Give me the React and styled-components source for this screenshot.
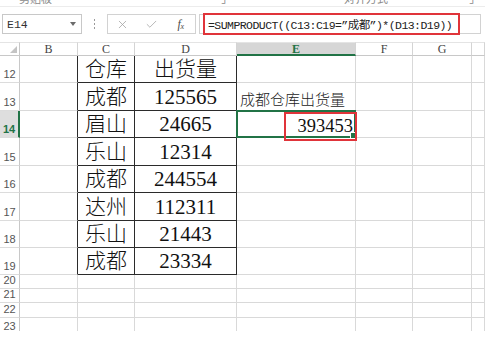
import React from 'react';
import styled, { createGlobalStyle } from 'styled-components';
import { X, Check } from 'lucide-react';

const GlobalStyle = createGlobalStyle`
  html, body {
    margin: 0;
    padding: 0;
    background: #fff;
  }
  body {
    width: 485px;
    height: 349px;
    overflow: hidden;
    font-family: "Liberation Sans", "Noto Sans CJK SC", sans-serif;
  }
`;

const GREEN = '#217346';
const GRID = '#d9d9d9';
const INK = '#2b2b2b';

const columns = [
  { key: 'B', w: 58 },
  { key: 'C', w: 57 },
  { key: 'D', w: 102 },
  { key: 'E', w: 119 },
  { key: 'F', w: 57 },
  { key: 'G', w: 59 },
  { key: 'H', w: 13 },
];

const rows = [
  { n: 12, h: 27, C: '仓库', D: '出货量' },
  { n: 13, h: 28, C: '成都', D: '125565', E: '成都仓库出货量' },
  { n: 14, h: 27, C: '眉山', D: '24665', E: '393453' },
  { n: 15, h: 28, C: '乐山', D: '12314' },
  { n: 16, h: 27, C: '成都', D: '244554' },
  { n: 17, h: 28, C: '达州', D: '112311' },
  { n: 18, h: 27, C: '乐山', D: '21443' },
  { n: 19, h: 27, C: '成都', D: '23334' },
  { n: 20, h: 14 },
  { n: 21, h: 14 },
  { n: 22, h: 15 },
  { n: 23, h: 17 },
];

const Page = styled.div`
  width: 485px;
  height: 349px;
  background: #fff;
  overflow: hidden;
`;

/* ribbon labels, mostly scrolled out of view */
const Ribbon = styled.div`
  height: 7px;
  display: flex;
  align-items: flex-end;
  overflow: hidden;
  border-bottom: 1px solid #ececec;
  box-sizing: border-box;
`;

const RibbonGroup = styled.div`
  width: ${(p) => p.$w}px;
  flex: none;
  height: 14px;
  display: flex;
  align-items: flex-end;
  justify-content: flex-end;
  padding-right: ${(p) => p.$pad || 0}px;
  box-sizing: border-box;
  font-size: 11px;
  line-height: 14px;
  color: #8a8a8a;
`;

const FormulaRow = styled.div`
  margin-top: 6px;
  height: 22px;
  display: flex;
  align-items: center;
`;

const NameBox = styled.div`
  margin-left: 2px;
  width: 80px;
  height: 20px;
  box-sizing: border-box;
  border: 1px solid #c8c8c8;
  display: flex;
  align-items: center;
  justify-content: space-between;
  padding: 0 4px;
  font-family: "Liberation Mono", monospace;
  font-size: 11.5px;
  color: #333;
`;

const Caret = styled.span`
  width: 0;
  height: 0;
  border-left: 3px solid transparent;
  border-right: 3px solid transparent;
  border-top: 4px solid #6b6b6b;
  margin-right: 1px;
`;

const Grip = styled.div`
  width: 25px;
  display: flex;
  flex-direction: column;
  align-items: center;
  gap: 2px;

  span {
    width: 1px;
    height: 2px;
    background: #9a9a9a;
  }
`;

const ButtonBox = styled.div`
  width: 89px;
  height: 20px;
  box-sizing: border-box;
  border: 1px solid #d2d2d2;
  display: grid;
  grid-template-columns: repeat(3, 1fr);
  align-items: center;
  justify-items: center;
  color: #a0a0a0;
`;

const Fx = styled.span`
  font-family: "Liberation Serif", serif;
  font-style: italic;
  font-size: 12px;
  color: #4a4a4a;
  letter-spacing: -0.5px;

  sub {
    font-size: 8px;
    vertical-align: -1px;
  }
`;

const FormulaBox = styled.div`
  margin-left: 3px;
  margin-right: 4px;
  flex: 1;
  height: 20px;
  box-sizing: border-box;
  border: 1px solid #d2d2d2;
  display: flex;
  align-items: center;
  padding-left: 3px;
`;

const RedFrame = styled.div`
  width: 257px;
  height: 22px;
  box-sizing: border-box;
  border: 2px solid #e0343a;
  display: flex;
  align-items: center;
  padding-left: 3px;
  font-family: "Liberation Mono", "Noto Sans CJK SC", monospace;
  font-size: 11.5px;
  letter-spacing: -0.55px;
  color: #222;
  white-space: nowrap;
`;

const Sheet = styled.div`
  margin-top: 7px;
  display: grid;
  grid-template-columns: 20px ${columns.map((c) => `${c.w}px`).join(' ')};
  grid-template-rows: 14px ${rows.map((r) => `${r.h}px`).join(' ')};
  height: 289px;
  overflow: hidden;
`;

const Corner = styled.div`
  box-sizing: border-box;
  border-right: 1px solid #c8c8c8;
  border-bottom: 1px solid #c8c8c8;
  border-top: 1px solid #e4e4e4;
  display: flex;
  align-items: flex-end;
  justify-content: flex-end;
  padding: 0 2px 2px 0;
`;

const ColHead = styled.div`
  box-sizing: border-box;
  border-top: 1px solid #e4e4e4;
  border-right: 1px solid #d4d4d4;
  border-bottom: ${(p) => (p.$active ? `2px solid ${GREEN}` : '1px solid #c8c8c8')};
  background: ${(p) => (p.$active ? '#d6d6d6' : '#fff')};
  color: ${(p) => (p.$active ? GREEN : '#444')};
  font-weight: ${(p) => (p.$active ? 700 : 400)};
  font-family: "Liberation Serif", serif;
  font-size: 12px;
  line-height: 1;
  display: flex;
  align-items: center;
  justify-content: center;
`;

const RowHead = styled.div`
  box-sizing: border-box;
  border-right: ${(p) => (p.$active ? `2px solid ${GREEN}` : '1px solid #c8c8c8')};
  border-bottom: 1px solid #dcdcdc;
  background: ${(p) => (p.$active ? '#dedede' : '#fff')};
  color: ${(p) => (p.$active ? GREEN : '#555')};
  font-weight: ${(p) => (p.$active ? 700 : 400)};
  font-family: "Liberation Sans", sans-serif;
  font-size: 11px;
  line-height: 1;
  display: flex;
  align-items: flex-end;
  justify-content: center;
  padding-bottom: 2px;
`;

const Cell = styled.div`
  position: relative;
  box-sizing: border-box;
  border-right: 1px solid ${(p) => (p.$edge ? INK : GRID)};
  border-bottom: 1px solid ${(p) => (p.$floor ? INK : GRID)};
  display: flex;
  align-items: flex-end;
  justify-content: ${(p) => p.$align || 'center'};
  padding: 0 3px 2px 3px;
  font-family: "Liberation Serif", "Noto Sans CJK SC", serif;
  font-size: 21px;
  font-weight: 300;
  line-height: 1;
  color: #111;
  white-space: nowrap;
`;

const Label = styled.span`
  font-family: "Noto Sans CJK SC", sans-serif;
  font-size: 15px;
  font-weight: 300;
  color: #222;
  line-height: 1;
  padding-bottom: 2px;
`;

const Selection = styled.div`
  position: absolute;
  top: -1px;
  left: -1px;
  right: -1px;
  bottom: -1px;
  border: 2px solid ${GREEN};
  pointer-events: none;
`;

const FillHandle = styled.div`
  position: absolute;
  right: -3px;
  bottom: -3px;
  width: 5px;
  height: 5px;
  background: ${GREEN};
  border: 1px solid #fff;
`;

const Callout = styled.div`
  position: absolute;
  top: 1px;
  right: -2px;
  width: 73px;
  height: 29px;
  box-sizing: border-box;
  border: 2px solid #e0343a;
  z-index: 2;
  display: flex;
  align-items: flex-end;
  justify-content: flex-end;
  padding: 0 2px 4px 0;
  font-family: "Liberation Serif", serif;
  font-size: 18.5px;
  line-height: 1;
  color: #111;
`;

const tableCols = ['C', 'D'];

function renderCell(row, col) {
  const inTable = row.n >= 12 && row.n <= 19;
  const edge = inTable && ['B', 'C', 'D'].includes(col.key);
  const floor = inTable && tableCols.includes(col.key);
  const key = `${row.n}-${col.key}`;

  if (col.key === 'E' && row.n === 13) {
    return (
      <Cell key={key} $align="flex-start">
        <Label>{row.E}</Label>
      </Cell>
    );
  }
  if (col.key === 'E' && row.n === 14) {
    return (
      <Cell key={key}>
        <Selection>
          <FillHandle />
        </Selection>
        <Callout>{row.E}</Callout>
      </Cell>
    );
  }
  return (
    <Cell key={key} $edge={edge} $floor={floor}>
      {tableCols.includes(col.key) ? row[col.key] : null}
    </Cell>
  );
}

export default function App() {
  return (
    <Page>
      <GlobalStyle />
      <Ribbon>
        <RibbonGroup $w={78} $pad={26}>剪贴板</RibbonGroup>
        <RibbonGroup $w={150} $pad={2}>⌟</RibbonGroup>
        <RibbonGroup $w={162} $pad={2}>对齐方式</RibbonGroup>
        <RibbonGroup $w={92} $pad={8}>⌟</RibbonGroup>
      </Ribbon>

      <FormulaRow>
        <NameBox>
          E14
          <Caret />
        </NameBox>
        <Grip>
          <span />
          <span />
          <span />
        </Grip>
        <ButtonBox>
          <X size={13} strokeWidth={1.4} />
          <Check size={13} strokeWidth={1.4} />
          <Fx>
            f<sub>x</sub>
          </Fx>
        </ButtonBox>
        <FormulaBox>
          <RedFrame>=SUMPRODUCT((C13:C19=”成都”)*(D13:D19))</RedFrame>
        </FormulaBox>
      </FormulaRow>

      <Sheet>
        <Corner>
          <svg width="7" height="7" viewBox="0 0 7 7">
            <polygon points="7,0 7,7 0,7" fill="#c4c4c4" />
          </svg>
        </Corner>
        {columns.map((c) => (
          <ColHead key={c.key} $active={c.key === 'E'}>
            {c.key === 'H' ? '' : c.key}
          </ColHead>
        ))}
        {rows.map((row) => (
          <React.Fragment key={row.n}>
            <RowHead $active={row.n === 14}>{row.n}</RowHead>
            {columns.map((col) => renderCell(row, col))}
          </React.Fragment>
        ))}
      </Sheet>
    </Page>
  );
}
